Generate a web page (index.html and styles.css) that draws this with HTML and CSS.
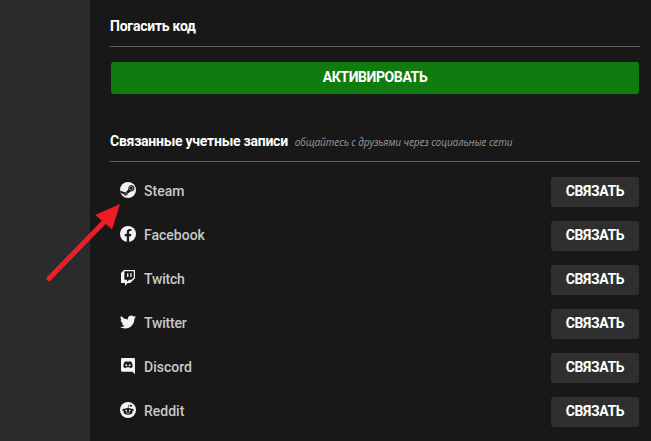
FILE: index.html
```html
<!DOCTYPE html>
<html lang="ru">
<head>
<meta charset="utf-8">
<title>Связанные учетные записи</title>
<link rel="stylesheet" href="styles.css">
</head>
<body>
<div class="app">
  <aside class="sidebar"></aside>
  <main class="content">
    <section class="redeem">
      <header class="section-head"><h2 class="redeem-title">Погасить код</h2></header>
      <button class="activate"><span>АКТИВИРОВАТЬ</span></button>
    </section>
    <section class="accounts">
      <header class="section-head"><h2 class="accounts-title">Связанные учетные записи</h2><em class="hint">общайтесь с друзьями через социальные сети</em></header>
      <ul class="list">
        <li class="row">
          <svg class="icon" viewBox="0 0 16 16"><circle cx="8" cy="8" r="8" fill="#f4f4f4"/><path d="M0 8.4 4.6 10.3 6.3 9.8 8.4 7.2A3.1 3.1 0 1 1 11.1 9.3L8.2 11.3A2.5 2.5 0 0 1 3.4 12.1L.6 10.9Z" fill="#181818"/><circle cx="11" cy="6.2" r="1.9" fill="none" stroke="#c4c4c4" stroke-width=".6"/><path d="M4.2 11.7 5.2 12.1A1.2 1.2 0 1 0 6 10.1L5.4 10.3" fill="none" stroke="#c4c4c4" stroke-width=".6"/></svg>
          <span class="name steam">Steam</span><button class="link">СВЯЗАТЬ</button>
        </li>
        <li class="row">
          <svg class="icon" viewBox="0 0 16 16"><circle cx="8" cy="8" r="8" fill="#f4f4f4"/><path d="M6.8 16V10.3H4.7V8H6.8V6.2C6.8 4.1 8 3 9.9 3Q10.8 3 11.5 3.2V5.1H10.4C9.4 5.1 9.1 5.7 9.1 6.4V8H11.4L11 10.3H9.1V16Z" fill="#181818"/></svg>
          <span class="name facebook">Facebook</span><button class="link">СВЯЗАТЬ</button>
        </li>
        <li class="row">
          <svg class="icon" viewBox="0 0 16 16"><path fill="#f4f4f4" fill-rule="evenodd" d="M4 0H15V8.3L10.3 13H7.9L5 15.7V13H1V3ZM4.4 1.2V9.7H7V11.8L9.1 9.7H11.4L13.8 7.4V1.2ZM7.1 3.3H8.4V7H7.1ZM10.3 3.3H11.6V7H10.3Z"/></svg>
          <span class="name twitch">Twitch</span><button class="link">СВЯЗАТЬ</button>
        </li>
        <li class="row">
          <svg class="icon" viewBox="0 0 24 24"><path fill="#f4f4f4" d="M23.95 4.57a10 10 0 0 1-2.82.77 4.96 4.96 0 0 0 2.16-2.72c-.95.55-2 .95-3.13 1.18a4.92 4.92 0 0 0-8.38 4.48C7.69 8.1 4.07 6.13 1.64 3.16a4.92 4.92 0 0 0 1.52 6.57 4.9 4.9 0 0 1-2.23-.61v.06a4.92 4.92 0 0 0 3.95 4.83 5 5 0 0 1-2.21.08 4.94 4.94 0 0 0 4.6 3.42A9.87 9.87 0 0 1 0 19.54 14 14 0 0 0 7.55 21.75c9.05 0 14-7.5 14-13.98l-.02-.64a9.9 9.9 0 0 0 2.46-2.55Z"/></svg>
          <span class="name twitter">Twitter</span><button class="link">СВЯЗАТЬ</button>
        </li>
        <li class="row">
          <svg class="icon" viewBox="0 0 16 16"><path fill="#f4f4f4" d="M2.3 0H13.7Q15 0 15 1.3V16L12.3 13.7H2.3Q1 13.7 1 12.4V1.3Q1 0 2.3 0Z"/><path fill="#181818" d="M4.4 4.2Q5.4 3.4 6.6 3.3L6.9 3.8H9.1L9.4 3.3Q10.6 3.4 11.6 4.2Q12.7 6.4 12.6 9.1Q11.7 10.1 10.2 10.1L9.6 9.3H6.4L5.8 10.1Q4.3 10.1 3.4 9.1Q3.3 6.4 4.4 4.2Z"/><circle cx="6.3" cy="7.3" r=".95" fill="#f4f4f4"/><circle cx="9.7" cy="7.3" r=".95" fill="#f4f4f4"/></svg>
          <span class="name discord">Discord</span><button class="link">СВЯЗАТЬ</button>
        </li>
        <li class="row">
          <svg class="icon" viewBox="0 0 16 16"><circle cx="8" cy="8" r="8" fill="#f4f4f4"/><g fill="#181818"><ellipse cx="8" cy="9.4" rx="4.5" ry="3.3"/><circle cx="3.6" cy="7.9" r="1.2"/><circle cx="12.4" cy="7.9" r="1.2"/><circle cx="11" cy="3.7" r="1"/></g><path d="M8 6.5 8.7 3.2 11 3.7" fill="none" stroke="#181818" stroke-width=".6"/><circle cx="6.2" cy="8.6" r=".95" fill="#f4f4f4"/><circle cx="9.8" cy="8.6" r=".95" fill="#f4f4f4"/><path d="M6.1 10.7Q8 12 9.9 10.7" fill="none" stroke="#f4f4f4" stroke-width=".7"/></svg>
          <span class="name reddit">Reddit</span><button class="link">СВЯЗАТЬ</button>
        </li>
      </ul>
    </section>
  </main>
  <svg class="arrow" viewBox="0 0 80 84"><path d="M9 77.5 66 19" stroke="#e91f29" stroke-width="5" stroke-linecap="round"/><path d="M80 3 55.2 14 72 28.5Z" fill="#f01c25"/></svg>
</div>
</body>
</html>
```
FILE: styles.css
```css
* { box-sizing: border-box; }
body { margin: 0; background: #181818; font-family: Roboto, "Liberation Sans", sans-serif; color: #fff; }
.app { position: relative; display: flex; width: 651px; height: 441px; overflow: hidden; }
.sidebar { width: 90px; flex: none; background: #2b2b2b; }
.content { flex: 1; padding: 7px 11px 0 20px; }
.section-head { display: flex; align-items: center; height: 40px; border-bottom: 1px solid #606060; white-space: nowrap; }
h2 { margin: 0 0 1px; font-size: 14px; line-height: 20px; font-weight: 700; letter-spacing: -0.25px; }
.hint { margin: 1px 0 0 7px; font: italic 10px/16px "Open Sans", sans-serif; letter-spacing: -0.1px; color: #989898; }
button { display: block; border: 0; padding: 0 0 2px; border-radius: 3px; color: #fff; font: 700 14px/28px Roboto, sans-serif; letter-spacing: -0.4px; }
.activate { width: 528px; height: 32px; margin: 15px 0 0 1px; background: #107c10; }
.accounts { margin-top: 28px; }
.list { list-style: none; margin: 8px 0 0; padding: 0; }
.row { display: flex; align-items: center; height: 44px; padding: 0 1px 0 10px; }
.icon { width: 16px; height: 16px; margin: -4px 8px 0 0; flex: none; }
.name { margin-bottom: 2px; font-size: 14px; line-height: 20px; font-weight: 500; color: #c8c8c8; }
.twitch, .twitter { letter-spacing: -0.2px; }
.link { width: 88px; height: 30px; margin-left: auto; background: #2f2f2f; }
.arrow { position: absolute; left: 40px; top: 201px; width: 80px; height: 84px; fill: none; }
```
